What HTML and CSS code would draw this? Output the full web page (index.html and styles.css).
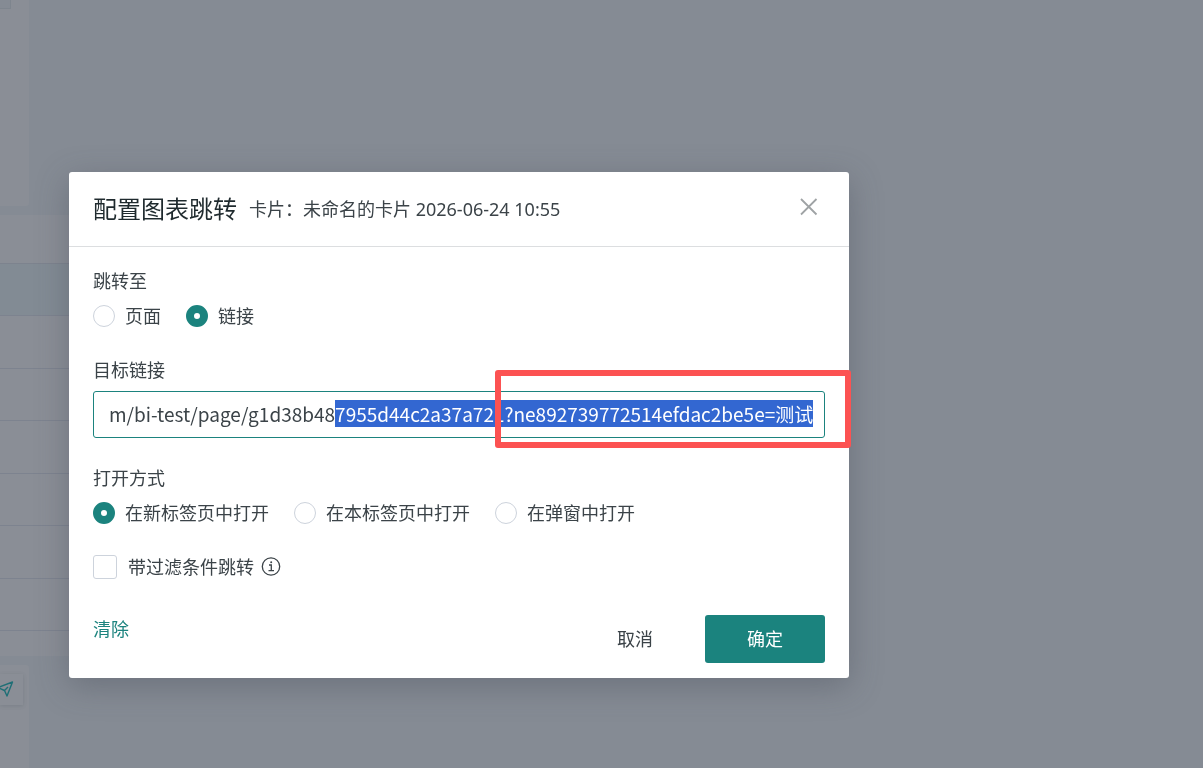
FILE: index.html
```html
<!DOCTYPE html>
<html lang="zh-CN">
<head>
    <title>配置图表跳转</title>
    <meta charset="UTF-8">
    <link rel="stylesheet" href="styles.css">
</head>
<body>
    <div class="page">
        <div class="card card-top"><div class="tag"></div></div>
        <div class="sheet">
            <div class="sheet-head"></div>
            <div class="sheet-rows">
                <div class="row active"></div>
                <div class="row"></div>
                <div class="row"></div>
                <div class="row"></div>
                <div class="row"></div>
                <div class="row"></div>
                <div class="row"></div>
            </div>
            <div class="sheet-foot"></div>
        </div>
        <div class="card card-bottom">
            <div class="send">
                <svg width="20" height="20" viewBox="0 0 20 20" fill="none" stroke="currentColor" stroke-width="1.4" stroke-linejoin="round">
                    <path d="M17.500 2 L12 16 L9.500 10.500 L3 7.500 Z M9.500 10.500 L13 7"/>
                </svg>
            </div>
        </div>
    </div>

    <div class="overlay">
        <form class="dialog" role="dialog" aria-labelledby="title">
            <div class="dialog-header">
                <h2 id="title">配置图表跳转</h2>
                <span class="subtitle">卡片：未命名的卡片 2026-06-24 10:55</span>
                <button type="button" class="close" aria-label="关闭">
                    <svg width="18" height="18" viewBox="0 0 18 18" fill="none" stroke="currentColor" stroke-width="1.8">
                        <path d="M1 1 L16.500 16.500 M16.500 1 L1 16.500"/>
                    </svg>
                </button>
            </div>
            <div class="dialog-body">
                <fieldset class="field">
                    <legend>跳转至</legend>
                    <div class="options">
                        <label class="option"><input type="radio" name="target">页面</label>
                        <label class="option"><input type="radio" name="target" checked>链接</label>
                    </div>
                </fieldset>
                <div class="field">
                    <label for="link">目标链接</label>
                    <div class="link-box">
                        <input type="text" id="link" spellcheck="false" autocomplete="off" value="m/bi-test/page/g1d38b487955d44c2a37a721?ne892739772514efdac2be5e=测试">
                        <div class="mark"></div>
                    </div>
                </div>
                <fieldset class="field">
                    <legend>打开方式</legend>
                    <div class="options">
                        <label class="option"><input type="radio" name="open" checked>在新标签页中打开</label>
                        <label class="option"><input type="radio" name="open">在本标签页中打开</label>
                        <label class="option"><input type="radio" name="open">在弹窗中打开</label>
                    </div>
                </fieldset>
                <div class="filter">
                    <label class="option"><input type="checkbox" name="filter">带过滤条件跳转</label>
                    <svg width="20" height="20" viewBox="0 0 20 20" fill="none" stroke="currentColor" stroke-width="1.3">
                        <circle cx="10" cy="9.500" r="8.700"/>
                        <path d="M8 8 H10.300 V13.500 M7.500 13.700 H13"/>
                        <circle cx="10.200" cy="5.300" r="1" fill="currentColor" stroke="none"/>
                    </svg>
                </div>
            </div>
            <div class="dialog-footer">
                <a href="#" class="clear">清除</a>
                <button type="button" class="btn">取消</button>
                <button type="submit" class="btn primary">确定</button>
            </div>
        </form>
    </div>

    <script src="script.js"></script>
</body>
</html>
```

FILE: styles.css
```css
* {
    box-sizing: border-box;
}
body {
    margin: 0;
    background-color: #858b94;
    color: #3b4348;
    font-family: "Noto Sans", "Noto Sans CJK SC", sans-serif;
    font-size: 18px;
    line-height: 28px;
}

/* page behind the dialog */
.page {
    height: 100vh;
    overflow: hidden;
    display: flex;
    flex-direction: column;
}
.card {
    width: 29px;
    background-color: #8a8e96;
}
.card-top {
    height: 206px;
    flex-shrink: 0;
    margin-bottom: 9px;
    border-radius: 0 0 3px 0;
}
.tag {
    width: 11px;
    height: 9px;
    border: 1px solid #7e858e;
    border-width: 0 1px 1px 0;
    background-color: #858b94;
}
.sheet {
    width: 400px;
    margin-bottom: 9px;
    background-color: #8a8e96;
}
.sheet-head {
    height: 49px;
    border-bottom: 1px solid #7d838e;
}
.sheet-rows {
    height: 367px;
    display: grid;
    grid-template-rows: repeat(7, 1fr);
}
.row {
    border-bottom: 1px solid #7d838f;
}
.row.active {
    background-color: #828b94;
}
.sheet-foot {
    height: 25px;
}
.card-bottom {
    flex: 1;
    padding-top: 9px;
    border-radius: 0 3px 0 0;
}
.send {
    width: 23px;
    height: 31px;
    display: flex;
    align-items: center;
    justify-content: flex-end;
    padding-right: 8px;
    color: #1f6f76;
    box-shadow: 0 1px 4px rgba(60, 68, 80, 0.2);
    overflow: hidden;
}
.send svg {
    flex-shrink: 0;
}

/* dialog */
.overlay {
    position: fixed;
    inset: 0;
    padding: 172px 69px 0;
}
.dialog {
    width: 100%;
    max-width: 780px;
    background-color: #fff;
    border-radius: 3px;
    box-shadow: 0 8px 32px rgba(70, 75, 88, 0.4);
}
.dialog-header {
    display: flex;
    align-items: center;
    padding: 19px 24px;
    border-bottom: 1px solid #dcdee0;
}
h2 {
    margin: 0 12px 0 0;
    color: #1f2a2e;
    font-size: 24px;
    font-weight: normal;
    line-height: 36px;
}
.close {
    align-self: flex-start;
    display: flex;
    align-items: center;
    justify-content: center;
    width: 32px;
    height: 32px;
    margin-left: auto;
    padding: 0;
    border: none;
    background: none;
    color: #9fa3a5;
    cursor: pointer;
}
.dialog-body {
    padding: 20px 24px;
}
.field {
    margin: 0 0 26px;
    padding: 0;
    border: none;
}
.field > label, legend {
    display: block;
    margin-bottom: 7px;
    padding: 0;
}
.options {
    display: flex;
    flex-wrap: wrap;
    gap: 25px;
}
.option {
    display: flex;
    align-items: center;
    gap: 10px;
}
input[type="radio"], input[type="checkbox"] {
    appearance: none;
    width: 22px;
    height: 22px;
    margin: 0;
    border: 1px solid #cdd3dc;
    border-radius: 50%;
    background-color: #fff;
}
input[type="radio"]:checked {
    border: 8px solid #1b837e;
}
input[type="checkbox"] {
    width: 24px;
    height: 24px;
    border-radius: 3px;
}
.link-box {
    position: relative;
}
.link-box input {
    display: block;
    width: 100%;
    height: 47px;
    padding: 0 10px 3px 15px;
    border: 1px solid #1b837e;
    border-radius: 3px;
    outline: none;
    color: inherit;
    font-family: "Noto Sans CJK SC", sans-serif;
    font-size: 19px;
    line-height: 30px;
}
.link-box input::selection {
    background-color: #3367d1;
    color: #fff;
}
.mark {
    position: absolute;
    top: -21px;
    right: -26px;
    bottom: -10px;
    width: 356px;
    border: 6px solid #fc5252;
    border-radius: 3px;
    pointer-events: none;
}
.filter {
    display: flex;
    align-items: center;
    gap: 7px;
}
.filter .option {
    gap: 11px;
}
.dialog-footer {
    display: flex;
    align-items: flex-start;
    gap: 10px;
    padding: 14px 24px 15px;
}
.clear {
    margin-right: auto;
    color: #1b837e;
    text-decoration: none;
}
.btn {
    width: 120px;
    height: 48px;
    border: none;
    border-radius: 3px;
    background-color: transparent;
    color: inherit;
    font: inherit;
    cursor: pointer;
}
.btn.primary {
    background-color: #1b837e;
    color: #fff;
}
```

FILE: script.js
```js
const link = document.getElementById('link');
link.focus();
link.setSelectionRange(link.value.indexOf('7955'), link.value.length);
link.scrollLeft = 0;
```
